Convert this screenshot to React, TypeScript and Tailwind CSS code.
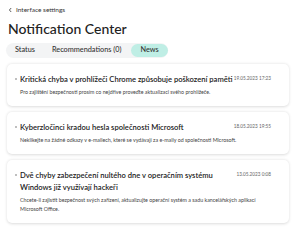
const news = [
  {
    title: 'Kritická chyba v prohlížeči Chrome způsobuje poškození paměti',
    date: '19.05.2023 17:23',
    body: 'Pro zajištění bezpečnosti prosím co nejdříve proveďte aktualizaci svého prohlížeče.',
  },
  {
    title: 'Kyberzločinci kradou hesla společnosti Microsoft',
    date: '18.05.2023 19:55',
    body: 'Neklikejte na žádné odkazy v e-mailech, které se vydávají za e-maily od společnosti Microsoft.',
  },
  {
    title: 'Dvě chyby zabezpečení nultého dne v operačním systému Windows již využívají hackeři',
    date: '13.05.2023 0:08',
    body: 'Chcete-li zajistit bezpečnost svých zařízení, aktualizujte operační systém a sadu kancelářských aplikací Microsoft Office.',
  },
]

export default function App() {
  return (
    <div className="w-[300px] h-[247px] bg-white overflow-hidden px-[7px] pt-[6px]" style={{ fontFamily: 'Lato, "Noto Sans", sans-serif' }}>
      {/* Back link */}
      <div className="flex items-center gap-[3px] pl-[1px] text-[6.5px] leading-[8px] text-[#333]">
        <svg width="5" height="6" viewBox="0 0 5 6" fill="none">
          <path d="M3.2 1 L1.4 3 L3.2 5" stroke="#333" strokeWidth="0.8" />
        </svg>
        <span>Interface settings</span>
      </div>

      {/* Title */}
      <h1 className="mt-[6px] pl-[1px] text-[14px] leading-[18px] text-[#222] font-medium">Notification Center</h1>

      {/* Tabs */}
      <div className="mt-[5px] -ml-[1px] w-fit flex items-center rounded-full bg-[#f3f4f5] h-[15px] pl-[1px] text-[7.3px] font-medium text-[#333]">
        <span className="px-[8px]">Status</span>
        <span className="px-[9px]">Recommendations (0)</span>
        <span className="ml-[1px] px-[9px] h-[13px] flex items-center rounded-full bg-[#bfeee5]">News</span>
      </div>

      {/* Cards */}
      <div className="mt-[6px] flex flex-col gap-[6px] pr-[4px]">
        {news.map((n) => (
          <div key={n.date} className="rounded-[5px] bg-white shadow-[0_0.5px_3px_rgba(0,0,0,0.14)] pl-[8px] pr-[18px] pt-[9px] pb-[9px]">
            <div className="flex justify-between items-start">
              <div className="flex items-start gap-[3px] max-w-[222px]">
                <span className="mt-[4.5px] w-[2px] h-[2px] rounded-full bg-[#aaa] shrink-0" />
                <span className="text-[7.6px] leading-[12px] font-semibold text-[#222]">{n.title}</span>
              </div>
              <span className="mt-[1px] text-[4.7px] leading-[8px] text-[#666] whitespace-nowrap">{n.date}</span>
            </div>
            <p className="mt-[3px] pl-[5px] text-[5.3px] leading-[9px] text-[#444]">{n.body}</p>
          </div>
        ))}
      </div>
    </div>
  )
}
